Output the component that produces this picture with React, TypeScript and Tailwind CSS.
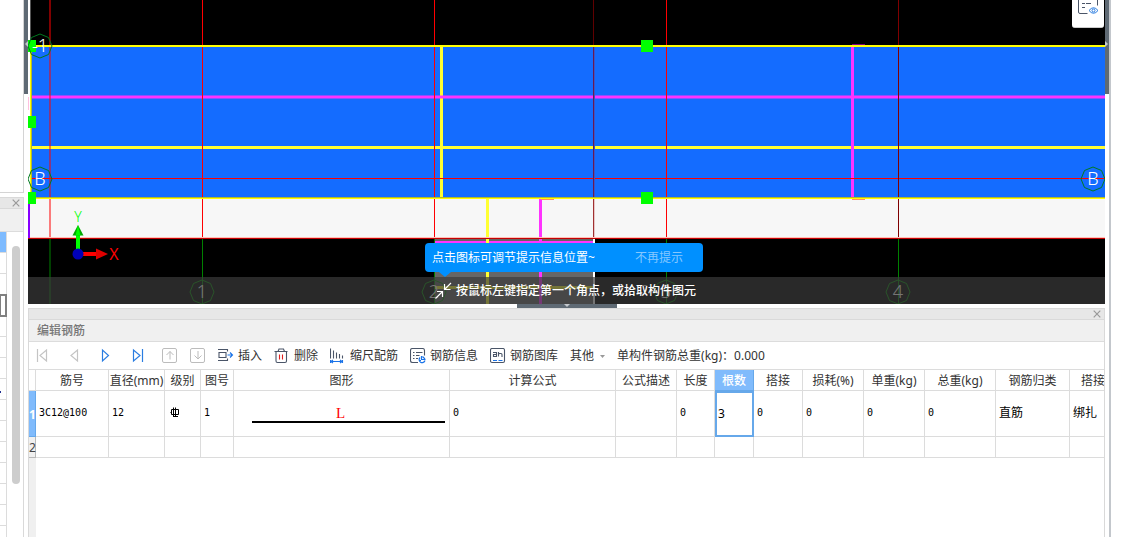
import React from 'react';
import clsx from 'clsx';

interface Column {
  title: string;
  width: string;
  value?: React.ReactNode;
  active?: boolean;
  cjk?: boolean;
}

// Rebar grade mark: a circle crossed by two bars, standing on a base line
const GradeMark = () => (
  <svg className="ml-[2px] h-[11px] w-[10px]" viewBox="0 0 10 11" fill="none" stroke="#000" aria-label="C">
    <path d="M1.500 2.500h7v5h-7zM0.500 5.500h1M3.500 0.500v9M5.500 0.500v9M3 9.500h5" />
  </svg>
);

const BarShape = () => (
  <div className="flex flex-col pt-1 pr-[4px] pl-[15px]">
    <span className="pr-4 text-center font-['Liberation_Serif',serif] text-[15px] leading-[15px] text-[#f00]">L</span>
    <div className="h-[2px] bg-black" />
  </div>
);

const columns: Column[] = [
  { title: '筋号', width: 'w-[73px]', value: '3C12@100' },
  { title: '直径(mm)', width: 'w-[56px]', value: '12' },
  { title: '级别', width: 'w-[36px]', value: <GradeMark /> },
  { title: '图号', width: 'w-[33px]', value: '1' },
  { title: '图形', width: 'w-[216px]', value: <BarShape /> },
  { title: '计算公式', width: 'w-[166px]', value: '0' },
  { title: '公式描述', width: 'w-[61px]' },
  { title: '长度', width: 'w-[38px]', value: '0' },
  { title: '根数', width: 'w-[39px]', value: '3', active: true },
  { title: '搭接', width: 'w-[49px]', value: '0' },
  { title: '损耗(%)', width: 'w-[61px]', value: '0' },
  { title: '单重(kg)', width: 'w-[61px]', value: '0' },
  { title: '总重(kg)', width: 'w-[71px]', value: '0' },
  { title: '钢筋归类', width: 'w-[74px]', value: '直筋', cjk: true },
  { title: '搭接', width: '', value: '绑扎', cjk: true },
];

const CloseIcon = () => (
  <svg className="h-[8px] w-[8px]" viewBox="0 0 8 8" stroke="#999" strokeWidth="1.2" fill="none">
    <path d="M0.7 0.7l6.6 6.6M7.3 0.7L0.7 7.3" />
  </svg>
);

const Icon = ({ children }: { children: React.ReactNode }) => (
  <svg className="h-4 w-4 shrink-0" viewBox="0 0 16 16" fill="none" stroke="#4a5568" strokeWidth="1.1">
    {children}
  </svg>
);

const navButtons = [
  { label: '首条', color: '#c4c4c4', d: 'M3.5 2v13M12.5 3v11L6 8.5z' },
  { label: '上一条', color: '#c4c4c4', d: 'M11.5 3v11L5 8.5z' },
  { label: '下一条', color: '#2a7de1', d: 'M4.5 3v11L10.5 8.5z' },
  { label: '末条', color: '#2a7de1', d: 'M3.5 3v11L10 8.5zM12.5 2v13' },
];

const moveButtons = [
  { label: '上移', d: 'M8 12.500V4.500M4.500 8L8 4.500L11.500 8' },
  { label: '下移', d: 'M8 4v8M4.500 8.500L8 12L11.500 8.500' },
];

const tools = [
  {
    label: '插入',
    icon: (
      <>
        <path d="M0 1.500h9.500v2M1 4.500h7v5H1zM0 12.500h9.500v-2" />
        <path d="M9.500 7h5M12 4.500L14.500 7L12 9.500" stroke="#1a73e8" />
      </>
    ),
  },
  {
    label: '删除',
    icon: (
      <>
        <path d="M0.500 3.500h13M4 3.500l1-2.500h4.500l1 2.500M2 3.500v9.500q0 1.500 1.500 1.500h7.500q1.500 0 1.500-1.500V3.500" />
        <path d="M5.500 6.500v5M8.500 6.500v5" stroke="#e02020" />
      </>
    ),
  },
  {
    label: '缩尺配筋',
    icon: (
      <>
        <path d="M0.500 0.500v10M3.500 2.500v8M6.500 4.500v6M9.500 6v4.500M12.500 7.500v3" />
        <path d="M0.500 12v3M12.500 12v3M0.500 13.500h12M3 12L1 13.500L3 15M10 12l2 1.500L10 15" stroke="#1a73e8" />
      </>
    ),
  },
  {
    label: '钢筋信息',
    icon: (
      <>
        <path d="M8 14.500H2.500Q0.500 14.500 0.500 12.500V2.500q0-2 2-2h10q2 0 2 2v5M3 4.500h1.500M6 4.500h6.500M3 7.500h1.500M6 7.500h3.500M3 10.500h1.500M6 10.500h2" />
        <path d="M11.500 8v3.500h4M10 9.500a3 3 0 1 0 5 3M12.500 8.500l2.500 2.500M9 12.500h2" stroke="#1a73e8" strokeWidth="1.2" />
      </>
    ),
  },
  {
    label: '钢筋图库',
    icon: (
      <>
        <rect x="0.5" y="0.500" width="14" height="14" rx="1.500" />
        <path d="M3 4.500h3.500v4H3.500v-2h3M8.500 8.500V4M8.500 6.500q0-1 1-1h1.500q1 0 1 1v2.500" />
        <path d="M3 12.500h4M8.500 12.500h4" stroke="#1a73e8" />
      </>
    ),
  },
];

const AxisLabel = ({ x, y, text, dim }: { x: number; y: number; text: string; dim?: boolean }) => (
  <g>
    <polygon
      points="0,-12 8.500,-8.500 12,0 8.500,8.500 0,12 -8.500,8.500 -12,0 -8.500,-8.500"
      transform={`translate(${x} ${y})`}
      fill="none"
      stroke={dim ? '#009000' : '#007a20'}
    />
    <text x={x} y={y + 6} textAnchor="middle" fontSize="18" fontWeight="300" fill="#fff">{text}</text>
  </g>
);

const ModelView = () => (
  <svg
    className="block h-[304px] w-full bg-black font-['Noto_Sans',sans-serif]"
    viewBox="28 0 1077 304"
    preserveAspectRatio="xMinYMin slice"
  >
    <g shapeRendering="crispEdges">
      <rect x="28" y="0" width="2" height="199" fill="#fff" />
      <rect x="30" y="0" width="1" height="45" fill="#555" />
      <rect x="28" y="97" width="1" height="13" fill="#ffc0e0" />
      <rect x="30" y="46" width="1090" height="152" fill="#146cff" />
      <rect x="28" y="199" width="1090" height="39" fill="#f7f7f7" />

      {/* beam section under the slab */}
      <rect x="434" y="239" width="160" height="65" fill="#666" />
      <rect x="435" y="241" width="158" height="2" fill="#ff33ff" />
      <rect x="593" y="239" width="2" height="65" fill="#fff" />
      <rect x="435" y="286" width="158" height="3" fill="#ffff33" />

      {/* rebar lines */}
      <rect x="440" y="47" width="3" height="151" fill="#ffff33" />
      <rect x="486" y="199" width="3" height="105" fill="#ffff33" />
      <rect x="30" y="95" width="1090" height="4" fill="#ff33ff" opacity="0.5" />
      <rect x="30" y="96" width="1090" height="2" fill="#ff33ff" />
      <rect x="30" y="146" width="1090" height="3" fill="#ffff33" />
      <rect x="851" y="47" width="3" height="151" fill="#ff33ff" />
      <rect x="539" y="199" width="3" height="105" fill="#ff33ff" />

      {/* grid axes */}
      <rect x="49" y="0" width="2" height="238" fill="#f00" opacity="0.5" />
      <rect x="49" y="239" width="2" height="65" fill="#004000" />
      <rect x="30" y="178" width="1090" height="1" fill="#f00" />
      {[202, 434, 666].map((x) => (
        <g key={x}>
          <rect x={x} y="0" width="1" height="238" fill="#f00" />
          <rect x={x} y="239" width="1" height="65" fill="#008000" />
        </g>
      ))}
      <rect x="593" y="0" width="1" height="45" fill="#600000" />
      <rect x="593" y="47" width="1" height="151" fill="#6a1a50" />
      <rect x="594" y="47" width="1" height="151" fill="#3a55c8" />
      <rect x="593" y="199" width="1" height="39" fill="#a03030" />
      <rect x="594" y="199" width="1" height="39" fill="#e8c8c8" />
      <rect x="898" y="0" width="1" height="238" fill="#800000" />
      <rect x="898" y="239" width="1" height="65" fill="#008000" />

      <rect x="28" y="237" width="1090" height="1" fill="#ffc0b8" />
      <rect x="28" y="238" width="1090" height="1" fill="#c80000" />

      {/* slab outline */}
      <rect x="30" y="45" width="1090" height="2" fill="#ffff00" />
      <rect x="30" y="197" width="1090" height="1" fill="#b0b830" />
      <rect x="30" y="198" width="1090" height="1" fill="#ffff00" />
      <rect x="30" y="45" width="1" height="154" fill="#ffff00" />
      <rect x="31" y="47" width="1" height="150" fill="#b0b830" />
      <rect x="852" y="44" width="13" height="1" fill="#800080" />
      <rect x="852" y="199" width="13" height="1" fill="#ff9060" />
      <rect x="541" y="199" width="13" height="1" fill="#ff9060" />
      <rect x="28" y="204" width="2" height="34" fill="#8800ff" />
    </g>

    <AxisLabel x={202} y={292} text="1" dim />
    <AxisLabel x={434} y={292} text="2" dim />
    <AxisLabel x={666} y={292} text="3" dim />
    <AxisLabel x={898} y={292} text="4" dim />

    {/* grips */}
    <g fill="#0f0">
      <rect x="28" y="40" width="8" height="12" />
      <rect x="28" y="116" width="8" height="12" />
      <rect x="28" y="192" width="8" height="12" />
      <rect x="641" y="40" width="12" height="12" />
      <rect x="641" y="192" width="12" height="12" />
    </g>

    <AxisLabel x={40} y={46} text="-1" />
    <AxisLabel x={40} y={179} text="B" />
    <AxisLabel x={1093} y={179} text="B" />

    {/* coordinate axes */}
    <rect x="76" y="234" width="4" height="16" fill="#0f0" />
    <path d="M78 225l5.500 10.500h-11z" fill="#00a800" />
    <path d="M78 225l2.500 10.500h-5z" fill="#0f0" />
    <rect x="82" y="252" width="15" height="4" fill="#f00" />
    <path d="M96 248.500l12 5.500l-12 5.500z" fill="#e00000" />
    <circle cx="78" cy="254" r="5.500" fill="#0000b8" />
    <text x="78" y="222" textAnchor="middle" fontSize="14" fontWeight="300" fill="#0f0">Y</text>
    <text x="114" y="260" textAnchor="middle" fontSize="16" fill="#f00">X</text>
  </svg>
);

const LeftDock = () => (
  <aside className="flex w-6 shrink-0 flex-col">
    <div className="h-[193px] border-r border-b border-[#d4d4d4]" />
    <div className="mt-1 flex flex-1 flex-col border-t border-r border-[#d9d9d9]">
      <div className="flex h-[11px] items-center justify-end border-b border-[#d9d9d9] bg-[#e7e7e7] pr-[3px]">
        <button aria-label="关闭"><CloseIcon /></button>
      </div>
      <div className="h-[23px] border-b border-[#dcdcdc] bg-[#f0f0f0]" />
      <div className="flex flex-1 gap-[5px]">
        <ul className="w-[7px] border-r border-[#dcdcdc]">
          {Array.from({ length: 14 }, (_, i) => (
            <li
              key={i}
              className={clsx(
                'h-[21px] border-b border-[#dcdcdc]',
                i === 0 && 'border-[#66a8ea] bg-[#7ebbff]',
                i === 3 && 'outline-2 -outline-offset-1 outline-[#808080]',
                i === 7 && 'flex items-center',
              )}
            >
              {i === 7 && <span className="mt-[5px] h-[2px] w-[1px] bg-[#203090]" />}
            </li>
          ))}
        </ul>
        <div className="mt-[14px] h-[238px] w-2 rounded-full bg-[#cdcdcd]" />
      </div>
    </div>
  </aside>
);

const Toolbar = () => (
  <div className="flex h-7 items-center gap-3 overflow-hidden border-b border-[#dcdcdc] pt-[1px] pl-[5px] whitespace-nowrap">
    <div className="flex gap-4">
      {navButtons.map((b) => (
        <button key={b.label} aria-label={b.label}>
          <svg className="h-4 w-4" viewBox="0 1 16 16" fill="none" stroke={b.color} strokeWidth="1.2">
            <path d={b.d} />
          </svg>
        </button>
      ))}
    </div>
    <div className="ml-1 flex gap-3">
      {moveButtons.map((b) => (
        <button key={b.label} aria-label={b.label}>
          <svg className="h-4 w-4" viewBox="0 1 16 16" fill="none" stroke="#bcbcbc">
            <rect x="0.5" y="1.500" width="14" height="14" rx="1.500" />
            <path d={b.d} />
          </svg>
        </button>
      ))}
    </div>
    {tools.map((t) => (
      <button key={t.label} className="flex items-center gap-1">
        <Icon>{t.icon}</Icon>
        {t.label}
      </button>
    ))}
    <button className="flex items-center gap-1.5">
      其他
      <svg className="h-[3px] w-[5px]" viewBox="0 0 5 3" fill="#999"><path d="M0 0h5L2.500 3z" /></svg>
    </button>
    <span>单构件钢筋总重(kg)：0.000</span>
  </div>
);

const RebarTable = () => (
  <table className="w-full table-fixed border-separate border-spacing-0">
    <thead>
      <tr className="h-[21px]">
        <th className="w-[7px] border-r border-b border-[#dcdcdc] p-0" />
        {columns.map((c, i) => (
          <th
            key={i}
            className={clsx(
              'overflow-hidden border-b p-0 pt-[2px] leading-[18px] whitespace-nowrap',
              c.width,
              c.active ? 'border-[#66a8ea] bg-[#80bbfc] font-medium text-white' : 'border-[#dcdcdc] font-normal',
              i < columns.length - 1 ? 'border-r' : 'pl-[11px] text-left',
            )}
          >
            {c.title}
          </th>
        ))}
      </tr>
    </thead>
    <tbody className="text-black">
      <tr className="h-[46px]">
        <th className="border-r border-b border-[#66a8ea] bg-[#80bbfc] p-0 pt-[2px] font-bold text-white">1</th>
        {columns.map((c, i) => (
          <td
            key={i}
            className={clsx(
              'overflow-hidden border-b border-[#dcdcdc] p-0 pb-[2px] pl-[3px] whitespace-nowrap',
              i < columns.length - 1 && 'border-r',
              c.active && 'pt-[2px] outline-2 -outline-offset-2 outline-[#66a8ea]',
              !c.active && !c.cjk && "font-['DejaVu_Sans_Mono',monospace] text-[10px]",
            )}
          >
            {c.value}
          </td>
        ))}
      </tr>
      <tr className="h-[21px]">
        <th className="border-r border-b border-[#b8b8b8] bg-[#f0f0f0] p-0 pt-[2px] leading-[18px] font-normal text-[#444]">2</th>
        {columns.map((_, i) => (
          <td key={i} className={clsx('border-b border-[#dcdcdc] p-0', i < columns.length - 1 && 'border-r')} />
        ))}
      </tr>
    </tbody>
  </table>
);

const App: React.FC = () => {
  return (
    <div className="flex min-h-screen w-full bg-white font-['Noto_Sans','Noto_Sans_CJK_SC',sans-serif] text-[12px] leading-4 text-[#333]">
      <LeftDock />

      <div className="w-1 shrink-0">
        <div className="flex h-[94px] items-start justify-end bg-[#5f6a74] pt-[41px]">
          <svg className="h-[6px] w-[3px]" viewBox="0 0 3 6" fill="#c4c8cc"><path d="M3 0v6L0 3z" /></svg>
        </div>
      </div>

      <main className="flex min-w-0 flex-1 flex-col">
        <section className="relative overflow-hidden">
          <ModelView />

          <button aria-label="显示设置" className="absolute top-0 right-[1px] h-7 w-8 rounded-b-[3px] border-b border-[#ccc] bg-white">
            <svg className="absolute top-0 left-[5px] h-4 w-[22px]" viewBox="0 0 22 16" fill="none" stroke="#4a5568">
              <path d="M1.500 0v12q0 1.500 1.500 1.500h7.500M20.500 0v5.500M5 3.500h3M9 3.500h5M5 7.500h3" />
              <path d="M12 10.500q4.500-5.500 9 0q-4.500 5.500-9 0z" stroke="#2a7de1" />
              <circle cx="16.500" cy="10.500" r="1.500" stroke="#2a7de1" />
            </svg>
          </button>

          <div className="absolute inset-x-0 bottom-0 flex h-[27px] items-center gap-1 bg-[#3a3a3a]/70 pl-[407px] font-medium whitespace-nowrap text-white">
            <svg className="h-[18px] w-[17px]" viewBox="0 0 17 18" fill="none" stroke="#fff" strokeWidth="1.2">
              <path d="M0.500 16.500L7.500 9.500M2 9.500h5.500v5.500M16 1L10 7M9.500 2v5.500h6" />
            </svg>
            按鼠标左键指定第一个角点，或拾取构件图元
          </div>

          {/* first-run tip, points at the icon in the hint bar */}
          <div className="absolute top-[243px] left-[397px] flex h-[29px] w-[278px] items-center justify-between rounded-[4px] bg-[#0090ff] pr-[20px] pl-[7px] whitespace-nowrap text-white">
            <span>点击图标可调节提示信息位置~</span>
            <button className="text-[#86c8ff]">不再提示</button>
            <svg className="absolute top-full left-[14px] h-[5px] w-3" viewBox="0 0 12 5" fill="#0090ff"><path d="M0 0h12L6 5z" /></svg>
          </div>
        </section>

        <div className="flex h-1 justify-center">
          <div className="flex w-[100px] justify-center bg-[#5f6a74]">
            <svg className="h-[3px] w-[6px]" viewBox="0 0 6 3" fill="#c4c8cc"><path d="M0 0h6L3 3z" /></svg>
          </div>
        </div>

        <section className="flex flex-1 flex-col border-x border-t border-[#d9d9d9]">
          <div className="flex h-[11px] items-center justify-end border-b border-[#d9d9d9] bg-[#e7e7e7] pr-[3px]">
            <button aria-label="关闭"><CloseIcon /></button>
          </div>
          <h2 className="h-[22px] border-b border-[#dcdcdc] bg-[#f0f0f0] pl-2 leading-[22px] font-medium text-[#777]">编辑钢筋</h2>
          <Toolbar />
          <RebarTable />
          <div className="w-[7px] flex-1 bg-[#f0f0f0]" />
        </section>
      </main>

      <div className="w-1 shrink-0">
        <div className="flex h-[94px] items-start bg-[#5f6a74] pt-[41px]">
          <svg className="h-[6px] w-[3px]" viewBox="0 0 3 6" fill="#c4c8cc"><path d="M0 0v6L3 3z" /></svg>
        </div>
      </div>
      <div className="w-[33px] shrink-0 border-l-2 border-[#c3c7cc]" />
    </div>
  );
};

export default App;
